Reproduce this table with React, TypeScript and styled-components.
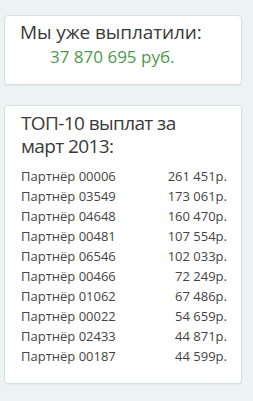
import React from "react";
import styled, { createGlobalStyle } from "styled-components";

const GlobalStyle = createGlobalStyle`
  html, body {
    margin: 0;
    padding: 0;
    background: #edf3f5;
  }
  body {
    font-family: "Open Sans", "Liberation Sans", sans-serif;
    color: #333;
  }
`;

const Page = styled.div`
  display: flex;
  flex-direction: column;
  gap: 20px;
  padding: 15px 11px 18px 4px;
`;

const Card = styled.div`
  background: #fff;
  border: 1px solid #d9dee1;
  border-radius: 4px;
  box-shadow: 0 1px 1px rgba(0, 0, 0, 0.04);
`;

const PaidCard = styled(Card)`
  height: 70px;
  box-sizing: border-box;
  padding: 5px 15px 0 15px;
`;

const Title = styled.div`
  font-size: 19px;
  line-height: 23px;
  color: #3a3a3a;
  letter-spacing: -0.1px;
`;

const Amount = styled.div`
  padding-left: 30px;
  margin-top: 1px;
  font-size: 17px;
  line-height: 24px;
  color: #4c9a4c;
`;

const TopCard = styled(Card)`
  padding: 6px 14px 17px 16px;
`;

const TopTitle = styled(Title)`
  margin-bottom: 8px;
  letter-spacing: -0.6px;
`;

const List = styled.ul`
  list-style: none;
  margin: 0;
  padding: 0;
`;

const Row = styled.li`
  display: flex;
  justify-content: space-between;
  font-size: 13px;
  line-height: 20px;
  color: #444;
`;

const payouts = [
  ["00006", "261 451р."],
  ["03549", "173 061р."],
  ["04648", "160 470р."],
  ["00481", "107 554р."],
  ["06546", "102 033р."],
  ["00466", "72 249р."],
  ["01062", "67 486р."],
  ["00022", "54 659р."],
  ["02433", "44 871р."],
  ["00187", "44 599р."],
];

export default function App() {
  return (
    <>
      <GlobalStyle />
      <Page>
        <PaidCard>
          <Title>Мы уже выплатили:</Title>
          <Amount>37 870 695 руб.</Amount>
        </PaidCard>
        <TopCard>
          <TopTitle>
            ТОП-10 выплат за
            <br />
            март 2013:
          </TopTitle>
          <List>
            {payouts.map(([id, sum]) => (
              <Row key={id}>
                <span>Партнёр {id}</span>
                <span>{sum}</span>
              </Row>
            ))}
          </List>
        </TopCard>
      </Page>
    </>
  );
}
